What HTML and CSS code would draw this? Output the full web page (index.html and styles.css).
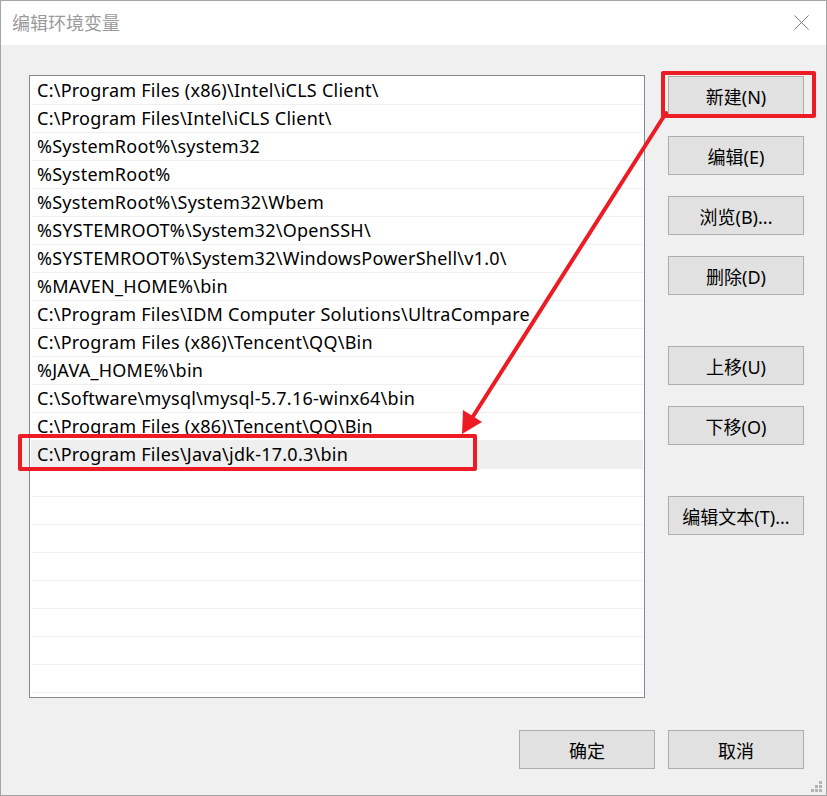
FILE: index.html
```html
<!DOCTYPE html>
<html lang="zh-CN">
<head>
<meta charset="utf-8">
<title>编辑环境变量</title>
<link rel="stylesheet" href="styles.css">
</head>
<body>
<div class="window">
  <div class="titlebar">
    <span class="title">编辑环境变量</span>
    <svg class="close" width="16" height="16" viewBox="0 0 16 16"><path d="M0.5 0.5 L15.5 15.5 M15.5 0.5 L0.5 15.5" stroke="#707070" stroke-width="1" fill="none"/></svg>
  </div>
  <div class="content">
    <div class="main">
      <div class="list">
        <div class="row">C:\Program Files (x86)\Intel\iCLS Client\</div>
        <div class="row">C:\Program Files\Intel\iCLS Client\</div>
        <div class="row">%SystemRoot%\system32</div>
        <div class="row">%SystemRoot%</div>
        <div class="row">%SystemRoot%\System32\Wbem</div>
        <div class="row">%SYSTEMROOT%\System32\OpenSSH\</div>
        <div class="row">%SYSTEMROOT%\System32\WindowsPowerShell\v1.0\</div>
        <div class="row">%MAVEN_HOME%\bin</div>
        <div class="row">C:\Program Files\IDM Computer Solutions\UltraCompare</div>
        <div class="row">C:\Program Files (x86)\Tencent\QQ\Bin</div>
        <div class="row">%JAVA_HOME%\bin</div>
        <div class="row">C:\Software\mysql\mysql-5.7.16-winx64\bin</div>
        <div class="row">C:\Program Files (x86)\Tencent\QQ\Bin</div>
        <div class="row selected">C:\Program Files\Java\jdk-17.0.3\bin</div>
        <div class="row"></div><div class="row"></div><div class="row"></div><div class="row"></div>
        <div class="row"></div><div class="row"></div><div class="row"></div><div class="row"></div>
        <div class="row"></div><div class="row"></div>
      </div>
      <div class="side">
        <div class="group">
          <button class="btn">新建(N)</button>
          <button class="btn">编辑(E)</button>
          <button class="btn">浏览(B)...</button>
          <button class="btn">删除(D)</button>
        </div>
        <div class="group">
          <button class="btn">上移(U)</button>
          <button class="btn">下移(O)</button>
        </div>
        <div class="group">
          <button class="btn">编辑文本(T)...</button>
        </div>
      </div>
    </div>
    <div class="footer">
      <button class="btn">确定</button>
      <button class="btn">取消</button>
    </div>
  </div>
  <svg class="grip" width="12" height="12" viewBox="0 0 12 12">
    <g fill="#b4b4b4">
      <rect x="8" y="0" width="3" height="3"/>
      <rect x="4" y="4" width="3" height="3"/><rect x="8" y="4" width="3" height="3"/>
      <rect x="0" y="8" width="3" height="3"/><rect x="4" y="8" width="3" height="3"/><rect x="8" y="8" width="3" height="3"/>
    </g>
  </svg>
  <div class="mark mark-new"></div>
  <div class="mark mark-row"></div>
  <svg class="arrow" width="827" height="796" viewBox="0 0 827 796">
    <line x1="666" y1="113" x2="472" y2="418" stroke="#ed1c24" stroke-width="4" stroke-linecap="round"/>
    <polygon points="462,434 463,410 482,422" fill="#ed1c24"/>
  </svg>
</div>
</body>
</html>
```
FILE: styles.css
```css
html, body {
  margin: 0;
  padding: 0;
}
body {
  width: 827px;
  height: 796px;
  overflow: hidden;
  font-family: "Noto Sans", "Noto Sans CJK SC", sans-serif;
}
.window {
  position: relative;
  box-sizing: border-box;
  width: 827px;
  height: 796px;
  border: 1px solid #a5a5a5;
  background: #f0f0f0;
}
.titlebar {
  height: 44px;
  background: #ffffff;
  display: flex;
  align-items: center;
  justify-content: space-between;
  padding: 0 17px 0 11px;
}
.title {
  font-family: "Noto Sans CJK SC", sans-serif;
  font-size: 18px;
  color: #9a9a9a;
  line-height: 1;
  margin-top: -2px;
}
.close {
  width: 15px;
  height: 15px;
  margin-top: -2px;
}
.content {
  padding: 30px 22px 0 28px;
}
.main {
  display: flex;
  gap: 23px;
}
.list {
  box-sizing: border-box;
  width: 616px;
  height: 623px;
  border: 1px solid #828790;
  background: #ffffff;
  padding: 1px;
  overflow: hidden;
}
.row {
  box-sizing: border-box;
  height: 28px;
  border-bottom: 1px solid #efefef;
  padding-left: 6px;
  font-size: 18px;
  letter-spacing: 0.25px;
  line-height: 27px;
  color: #000000;
  white-space: nowrap;
}
.row.selected {
  background: #efefef;
}
.side {
  display: flex;
  flex-direction: column;
  gap: 51px;
  padding-top: 1px;
}
.group {
  display: flex;
  flex-direction: column;
  gap: 21px;
}
.btn {
  box-sizing: border-box;
  width: 136px;
  height: 39px;
  border: 1px solid #adadad;
  background: #e1e1e1;
  font-family: "Noto Sans", "Noto Sans CJK SC", sans-serif;
  font-size: 18px;
  color: #000000;
  padding: 0;
  margin: 0;
}
.footer {
  display: flex;
  justify-content: flex-end;
  gap: 13px;
  margin-top: 32px;
}
.grip {
  position: absolute;
  right: 3px;
  bottom: 2px;
}
.mark {
  position: absolute;
  box-sizing: border-box;
  border: 4px solid #ed1c24;
  border-radius: 2px;
}
.mark-new {
  left: 660px;
  top: 70px;
  width: 155px;
  height: 47px;
}
.mark-row {
  left: 17px;
  top: 433px;
  width: 459px;
  height: 37px;
}
.arrow {
  position: absolute;
  left: -1px;
  top: -1px;
  pointer-events: none;
}
```
